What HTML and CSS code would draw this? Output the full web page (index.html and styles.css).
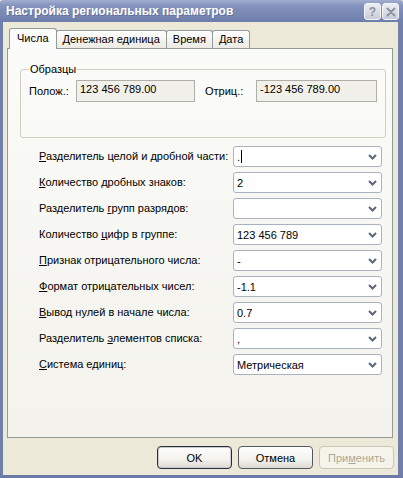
FILE: index.html
```html
<!DOCTYPE html>
<html lang="ru">
<head>
<meta charset="utf-8">
<link rel="stylesheet" href="styles.css">
</head>
<body>
<div class="window">
  <div class="titlebar">
    <span class="title">Настройка региональных параметров</span>
    <div class="tbtns">
      <span class="tbtn help">?</span>
      <span class="tbtn close"><svg width="10" height="10" viewBox="0 0 10 10"><path d="M1.5 1.5 L8.5 8.5 M8.5 1.5 L1.5 8.5" stroke="#8b909e" stroke-width="2" stroke-linecap="round"/></svg></span>
    </div>
  </div>
  <div class="body">
    <div class="tabs">
      <div class="tab active">Числа</div>
      <div class="tab">Денежная единица</div>
      <div class="tab">Время</div>
      <div class="tab">Дата</div>
    </div>
    <div class="panel">
      <fieldset class="group">
        <legend>Образцы</legend>
        <div class="samples">
          <span class="slabel">Полож.:</span>
          <div class="ro ro1">123 456 789.00</div>
          <span class="slabel s2">Отриц.:</span>
          <div class="ro ro2">-123 456 789.00</div>
        </div>
      </fieldset>
      <div class="form">
        <label><u>Р</u>азделитель целой и дробной части:</label>
        <div class="combo"><span class="val">.<span class="caret"></span></span><svg class="arr" width="9" height="6" viewBox="0 0 9 6"><path d="M1 1 L4.5 4.5 L8 1" fill="none" stroke="#5c6677" stroke-width="2"/></svg></div>
        <label><u>К</u>оличество дробных знаков:</label>
        <div class="combo"><span class="val">2</span><svg class="arr" width="9" height="6" viewBox="0 0 9 6"><path d="M1 1 L4.5 4.5 L8 1" fill="none" stroke="#5c6677" stroke-width="2"/></svg></div>
        <label>Разделитель <u>г</u>рупп разрядов:</label>
        <div class="combo"><span class="val"></span><svg class="arr" width="9" height="6" viewBox="0 0 9 6"><path d="M1 1 L4.5 4.5 L8 1" fill="none" stroke="#5c6677" stroke-width="2"/></svg></div>
        <label>Количество <u>ц</u>ифр в группе:</label>
        <div class="combo"><span class="val">123 456 789</span><svg class="arr" width="9" height="6" viewBox="0 0 9 6"><path d="M1 1 L4.5 4.5 L8 1" fill="none" stroke="#5c6677" stroke-width="2"/></svg></div>
        <label><u>П</u>ризнак отрицательного числа:</label>
        <div class="combo"><span class="val">-</span><svg class="arr" width="9" height="6" viewBox="0 0 9 6"><path d="M1 1 L4.5 4.5 L8 1" fill="none" stroke="#5c6677" stroke-width="2"/></svg></div>
        <label><u>Ф</u>ормат отрицательных чисел:</label>
        <div class="combo"><span class="val">-1.1</span><svg class="arr" width="9" height="6" viewBox="0 0 9 6"><path d="M1 1 L4.5 4.5 L8 1" fill="none" stroke="#5c6677" stroke-width="2"/></svg></div>
        <label><u>В</u>ывод нулей в начале числа:</label>
        <div class="combo"><span class="val">0.7</span><svg class="arr" width="9" height="6" viewBox="0 0 9 6"><path d="M1 1 L4.5 4.5 L8 1" fill="none" stroke="#5c6677" stroke-width="2"/></svg></div>
        <label>Разделитель <u>э</u>лементов списка:</label>
        <div class="combo"><span class="val">,</span><svg class="arr" width="9" height="6" viewBox="0 0 9 6"><path d="M1 1 L4.5 4.5 L8 1" fill="none" stroke="#5c6677" stroke-width="2"/></svg></div>
        <label><u>С</u>истема единиц:</label>
        <div class="combo"><span class="val">Метрическая</span><svg class="arr" width="9" height="6" viewBox="0 0 9 6"><path d="M1 1 L4.5 4.5 L8 1" fill="none" stroke="#5c6677" stroke-width="2"/></svg></div>
      </div>
    </div>
    <div class="buttons">
      <div class="btn default">OK</div>
      <div class="btn">Отмена</div>
      <div class="btn disabled">При<u>м</u>енить</div>
    </div>
  </div>
</div>
</body>
</html>
```

FILE: styles.css
```css
html, body {
  margin: 0;
  padding: 0;
}
body {
  width: 403px;
  height: 478px;
  overflow: hidden;
  font-family: "Liberation Sans", Arial, sans-serif;
  font-size: 11px;
  color: #000;
}
.window {
  width: 403px;
  height: 478px;
  box-sizing: border-box;
  display: flex;
  flex-direction: column;
  background: #ECE9D8;
}
.titlebar {
  height: 22px;
  flex: none;
  display: flex;
  align-items: center;
  justify-content: space-between;
  padding: 0 4px 0 6px;
  background: linear-gradient(#a3aed0 0%, #8593bd 25%, #7a89b5 60%, #6f7fab 100%);
  border-radius: 3px 3px 0 0;
}
.title {
  color: #fff;
  font-weight: bold;
  font-size: 12px;
  text-shadow: 1px 1px 0 rgba(60,70,110,0.35);
}
.tbtns {
  display: flex;
  gap: 1px;
  margin-top: 1px;
}
.tbtn {
  width: 15px;
  height: 15px;
  border: 1px solid #f4f5f8;
  border-radius: 3px;
  background: linear-gradient(#eceef3, #c8ccd7);
  display: flex;
  align-items: center;
  justify-content: center;
  box-sizing: content-box;
}
.help {
  font-weight: bold;
  font-size: 12px;
  color: #8b909e;
}
.body {
  flex: 1;
  display: flex;
  flex-direction: column;
  padding: 6px 5px 0 4px;
  border-left: 3px solid #7080aa;
  border-right: 5px solid #7080aa;
  border-bottom: 3px solid #6a7aa5;
}
.tabs {
  display: flex;
  align-items: flex-end;
  height: 21px;
  padding-left: 2px;
  margin-bottom: -1px;
  position: relative;
  z-index: 1;
}
.tab {
  height: 17px;
  line-height: 16px;
  padding: 0 6px;
  border: 1px solid #919b9c;
  border-bottom: none;
  border-radius: 3px 3px 0 0;
  background: linear-gradient(#fefefe, #eceae2);
  margin-right: -1px;
  margin-bottom: 1px;
}
.tab.active {
  height: 20px;
  line-height: 18px;
  margin-bottom: 0;
  padding: 0 7px;
  background: #fcfcfb;
  position: relative;
  z-index: 2;
}
.panel {
  height: 390px;
  box-sizing: border-box;
  border: 1px solid #919b9c;
  background: linear-gradient(#fbfbf9, #f3f2ec);
  padding: 14px 9px 0 12px;
}
.group {
  margin: 0;
  padding: 4px 8px 35px 8px;
  border: 1px solid #d0d0bf;
  border-radius: 3px;
  width: 363px;
  box-sizing: border-box;
}
.group legend {
  padding: 0 1px;
  line-height: 13px;
  color: #000;
}
.samples {
  display: flex;
  align-items: flex-start;
}
.slabel {
  line-height: 14px;
  margin-top: 4px;
  width: 47px;
}
.slabel.s2 {
  margin-left: 10px;
  width: 51px;
}
.ro {
  height: 22px;
  box-sizing: border-box;
  border: 1px solid #b0afa7;
  background: #f1f0ea;
  padding: 1px 3px;
  line-height: 14px;
}
.ro1 {
  width: 119px;
}
.ro2 {
  width: 121px;
}
.form {
  display: grid;
  grid-template-columns: 194px 149px;
  grid-auto-rows: 21px;
  row-gap: 5px;
  margin-top: 8px;
  padding-left: 19px;
}
.form label {
  display: block;
  line-height: 21px;
  white-space: nowrap;
}
.combo {
  box-sizing: border-box;
  border: 1px solid #a9b3bf;
  border-radius: 3px;
  background: #fff;
  display: flex;
  align-items: center;
  justify-content: space-between;
  padding: 0 4px 0 3px;
}
.val {
  display: flex;
  align-items: center;
  white-space: pre;
}
.caret {
  display: inline-block;
  width: 1px;
  height: 13px;
  background: #000;
  margin-left: 1px;
}
.arr {
  display: block;
}
.buttons {
  display: flex;
  justify-content: flex-end;
  gap: 6px;
  margin-top: 8px;
  margin-right: -1px;
}
.btn {
  width: 75px;
  height: 23px;
  box-sizing: border-box;
  border: 1px solid #55585f;
  border-radius: 4px;
  background: linear-gradient(#ffffff, #f2f1ec 60%, #dcdad2);
  display: flex;
  align-items: center;
  justify-content: center;
}
.btn.default {
  border-color: #2c2f36;
  box-shadow: inset 0 0 0 1px #c7cad3;
}
.btn.disabled {
  border-color: #c9c7ba;
  background: #f5f4ea;
  color: #aca899;
}
```
